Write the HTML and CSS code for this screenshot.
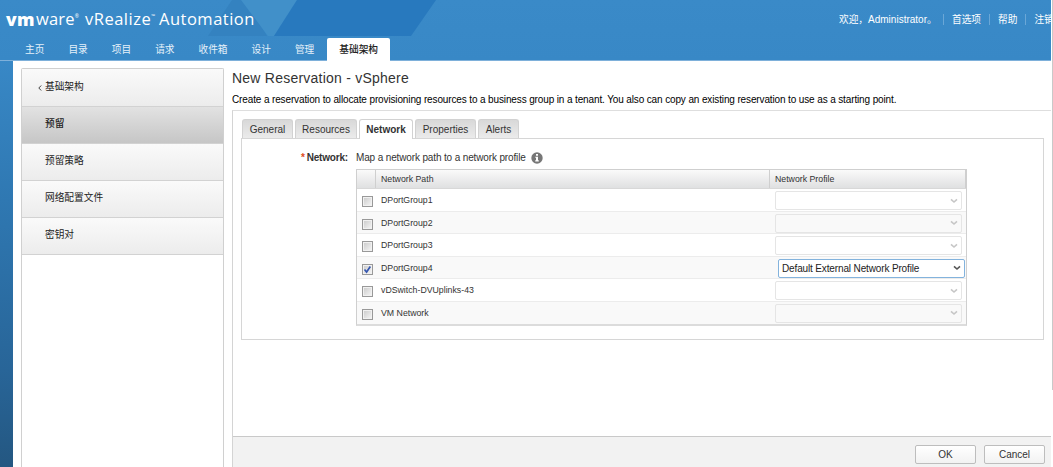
FILE: index.html
```html
<!DOCTYPE html>
<html lang="zh-CN">
<head>
<meta charset="utf-8">
<title>vRealize Automation</title>
<link rel="stylesheet" href="styles.css">
</head>
<body>
<div class="app">
  <header class="header">
    <svg class="facets" width="1051" height="61" viewBox="0 0 1051 61">
      <path d="M208 36L232 0H246L267 36Z" fill="#3482c0"/>
      <path d="M241 0H297L274 36H268Z" fill="#4190c9"/>
      <path d="M297 0H436L411 36H274Z" fill="#2879be"/>
    </svg>
    <div class="topbar">
      <div class="brand"><b>vm</b><span class="ware">ware<sup>®</sup></span><span class="product">vRealize<sup>™</sup></span><span class="auto">Automation</span></div>
      <div class="user"><span class="welcome">欢迎，<em>Administrator</em>。</span><a>首选项</a><a>帮助</a><a>注销</a></div>
    </div>
    <nav class="nav"><a>主页</a><a>目录</a><a>项目</a><a>请求</a><a>收件箱</a><a>设计</a><a>管理</a><a class="current">基础架构</a></nav>
  </header>
  <div class="body">
    <aside class="sidebar">
      <div class="item back"><svg width="4" height="8" viewBox="0 0 4 8"><path d="M3.2 1.5L.8 4L3.2 6.5" fill="none" stroke="#444"/></svg>基础架构</div>
      <div class="item active">预留</div>
      <div class="item">预留策略</div>
      <div class="item">网络配置文件</div>
      <div class="item">密钥对</div>
    </aside>
    <main class="main">
      <h1 class="title">New Reservation - vSphere</h1>
      <p class="desc">Create a reservation to allocate provisioning resources to a business group in a tenant. You also can copy an existing reservation to use as a starting point.</p>
      <section class="panel">
        <div class="tabs"><span class="tab t1">General</span><span class="tab t2">Resources</span><span class="tab t3 on">Network</span><span class="tab t4">Properties</span><span class="tab t5">Alerts</span></div>
        <div class="sheet">
          <div class="field">
            <label class="label"><i>*</i>Network:</label>
            <span class="hint">Map a network path to a network profile</span>
            <svg class="info" width="12" height="12" viewBox="0 0 12 12"><circle cx="6" cy="6" r="5.7" fill="#777"/><path d="M5 2h2v1.7H5zM4.3 4.7H7v3.6h.8v1.2H4.2V8.3H5V5.8h-.7z" fill="#fff"/></svg>
          </div>
          <div class="table">
            <div class="thead"><span></span><span>Network Path</span><span>Network Profile</span></div>
            <div class="row"><i class="check"></i><span class="name">DPortGroup1</span><div class="select"><span></span><svg width="8" height="6" viewBox="0 0 8 6"><path d="M1 1.3L4 4L7 1.3"/></svg></div></div>
            <div class="row"><i class="check"></i><span class="name">DPortGroup2</span><div class="select"><span></span><svg width="8" height="6" viewBox="0 0 8 6"><path d="M1 1.3L4 4L7 1.3"/></svg></div></div>
            <div class="row"><i class="check"></i><span class="name">DPortGroup3</span><div class="select"><span></span><svg width="8" height="6" viewBox="0 0 8 6"><path d="M1 1.3L4 4L7 1.3"/></svg></div></div>
            <div class="row"><i class="check"><svg width="9" height="9" viewBox="0 0 9 9"><path d="M1.5 4.5L3.6 7L7.3 1.5" fill="none" stroke="#3557b0" stroke-width="1.7"/></svg></i><span class="name">DPortGroup4</span><div class="select enabled"><span>Default External Network Profile</span><svg width="8" height="6" viewBox="0 0 8 6"><path d="M1 1.3L4 4L7 1.3"/></svg></div></div>
            <div class="row"><i class="check"></i><span class="name">vDSwitch-DVUplinks-43</span><div class="select"><span></span><svg width="8" height="6" viewBox="0 0 8 6"><path d="M1 1.3L4 4L7 1.3"/></svg></div></div>
            <div class="row"><i class="check"></i><span class="name">VM Network</span><div class="select"><span></span><svg width="8" height="6" viewBox="0 0 8 6"><path d="M1 1.3L4 4L7 1.3"/></svg></div></div>
          </div>
        </div>
        <footer class="footer"><button class="btn">OK</button><button class="btn">Cancel</button></footer>
      </section>
    </main>
  </div>
</div>
<div class="edge"></div>
</body>
</html>
```

FILE: styles.css
```css
* { box-sizing: border-box; }
body {
  margin: 0;
  width: 1053px;
  height: 467px;
  overflow: hidden;
  display: flex;
  font-family: "Liberation Sans", "Noto Sans CJK SC", sans-serif;
  font-size: 10px;
  color: #333;
  background: #fff;
}
.app {
  width: 1051px;
  height: 467px;
  overflow: hidden;
  background: linear-gradient(#3a8ac8 0, #3888c6 60px, #2f78b2 200px, #286598 370px, #245781 467px);
}
.edge { width: 1px; height: 390px; margin-left: 1px; background: #c9c9c9; }

.header { position: relative; height: 61px; overflow: hidden; }
.facets { position: absolute; left: 0; top: 0; }
.topbar { position: relative; height: 38px; display: flex; justify-content: space-between; color: #fff; }
.brand { display: flex; padding: 7px 0 0 6px; font: 16.5px/24px "Open Sans", sans-serif; white-space: nowrap; }
.brand b { width: 30px; font-weight: 800; font-size: 17.5px; letter-spacing: 0.3px; }
.brand sup { font-size: 5px; line-height: 5px; vertical-align: 7px; letter-spacing: 0; }
.ware { width: 49px; letter-spacing: 0.2px; }
.product { width: 74px; letter-spacing: 0.5px; }
.auto { letter-spacing: 0.5px; }
.user { display: flex; flex: none; width: 212px; padding-top: 13px; line-height: 14px; font-size: 9.7px; white-space: nowrap; }
.welcome { flex: none; width: 113px; }
.welcome em { font-style: normal; font-size: 10px; }
.user a { flex: none; padding-right: 17px; }
.user a::before { content: ""; display: inline-block; width: 1px; height: 11px; margin-left: -9px; margin-right: 8px; vertical-align: -2px; background: #6aa7d7; }

.nav { position: relative; display: flex; height: 23px; padding-left: 13px; font-size: 9.7px; line-height: 23px; color: #e6f1fa; border-bottom: 1px solid #7eb0da; }
.nav a { height: 23px; padding: 0 12px; flex: none; }
.nav .current { margin-left: 1px; width: 63px; background: #fff; color: #222; border-radius: 2px 2px 0 0; font-weight: 500; }

.body { display: flex; height: 406px; margin-left: 13px; background: #fff; }
.sidebar { width: 203px; margin: 7px 8px 0 8px; border: 1px solid #d0d0d0; border-bottom: 0; border-radius: 2px 2px 0 0; font-size: 9.7px; }
.item { height: 37px; padding-left: 23px; line-height: 34px; color: #222; background: linear-gradient(#fafafa, #ececec); border-bottom: 1px solid #d2d2d2; }
.item.back { height: 38px; padding-left: 16px; line-height: 35px; }
.item.back svg { margin-right: 3px; vertical-align: -2px; }
.item.active { background: linear-gradient(#e2e2e2, #c6c6c6); font-weight: 500; }

.main { flex: 1; display: flex; flex-direction: column; min-width: 0; }
.title { margin: 7px 0 0; font-size: 14px; line-height: 20px; font-weight: 400; letter-spacing: 0.23px; color: #333; }
.desc { margin: 5px 0 4px; height: 13px; font-size: 10px; line-height: 14px; letter-spacing: -0.13px; color: #000; white-space: nowrap; }
.panel { flex: 1; display: flex; flex-direction: column; border-left: 1px solid #d4d4d4; border-top: 1px solid #dedede; }
.tabs { display: flex; gap: 2px; margin: 8px 0 0 9px; height: 19px; }
.tab { height: 19px; line-height: 19px; text-align: center; border: 1px solid #d2d2d2; border-bottom: 0; border-radius: 3px 3px 0 0; background: linear-gradient(#d8d8d8, #ebebeb); }
.t1 { width: 51px; }
.t2 { width: 62px; }
.t3 { width: 54px; }
.t4 { width: 61px; }
.t5 { width: 41px; }
.tab.on { background: #fff; font-weight: 700; height: 20px; position: relative; }
.sheet { height: 202px; margin: 0 7px 0 8px; border: 1px solid #d6d6d6; }
.field { display: flex; height: 30px; padding: 12px 0 0 59px; line-height: 14px; white-space: nowrap; }
.label { width: 55px; font-weight: 700; letter-spacing: -0.2px; }
.label i { font-style: normal; color: #e04a20; margin-right: 2px; }
.hint { width: 175px; letter-spacing: -0.14px; }
.info { margin-top: 1px; }
.table { width: 611px; height: 157px; margin-left: 114px; border: 1px solid #cfcfcf; border-bottom: 2px solid #dcdcdc; font-size: 8.75px; }
.thead { display: grid; grid-template-columns: 19px 394px 1fr; height: 19px; line-height: 18px; background: linear-gradient(#fafafa, #dfe0e1); border-bottom: 1px solid #d8d8d8; }
.thead span { padding-left: 5px; border-right: 1px solid #cfcfcf; }
.row { display: grid; grid-template-columns: 24px 394px 187px; height: 22.5px; border-bottom: 1px solid #ececec; }
.row:nth-child(odd) { background: #f9f9f9; }
.row:last-child { border-bottom: 0; }
.name { line-height: 23px; }
.check { width: 11px; height: 11px; margin: 7px 0 0 5px; border: 1px solid #999; background: linear-gradient(135deg, #c9c9c9, #f7f7f7); box-shadow: inset 0 0 0 1px #f1f1f1; display: flex; }
.select { width: 187px; height: 19px; margin-top: 2px; padding: 0 3px; display: flex; align-items: center; justify-content: space-between; border: 1px solid #e5e5e5; border-radius: 2px; }
.select path { fill: none; stroke: #c6c6c6; stroke-width: 1.6; }
.select.enabled { margin-left: 3px; border-color: #83b3dd; background: #fff; font-size: 10px; letter-spacing: -0.14px; color: #222; }
.select.enabled path { stroke: #555; }
.footer { margin-top: auto; height: 31px; flex: none; display: flex; justify-content: flex-end; gap: 8px; padding: 8px 6px 0 0; background: #f2f2f2; border-top: 1px solid #c9c9c9; }
.btn { width: 61px; height: 19px; padding: 0; font: 10px/16px "Liberation Sans", sans-serif; color: #333; background: linear-gradient(#fff, #f2f2f2); border: 1px solid #bdbdbd; border-radius: 2px; }
```
